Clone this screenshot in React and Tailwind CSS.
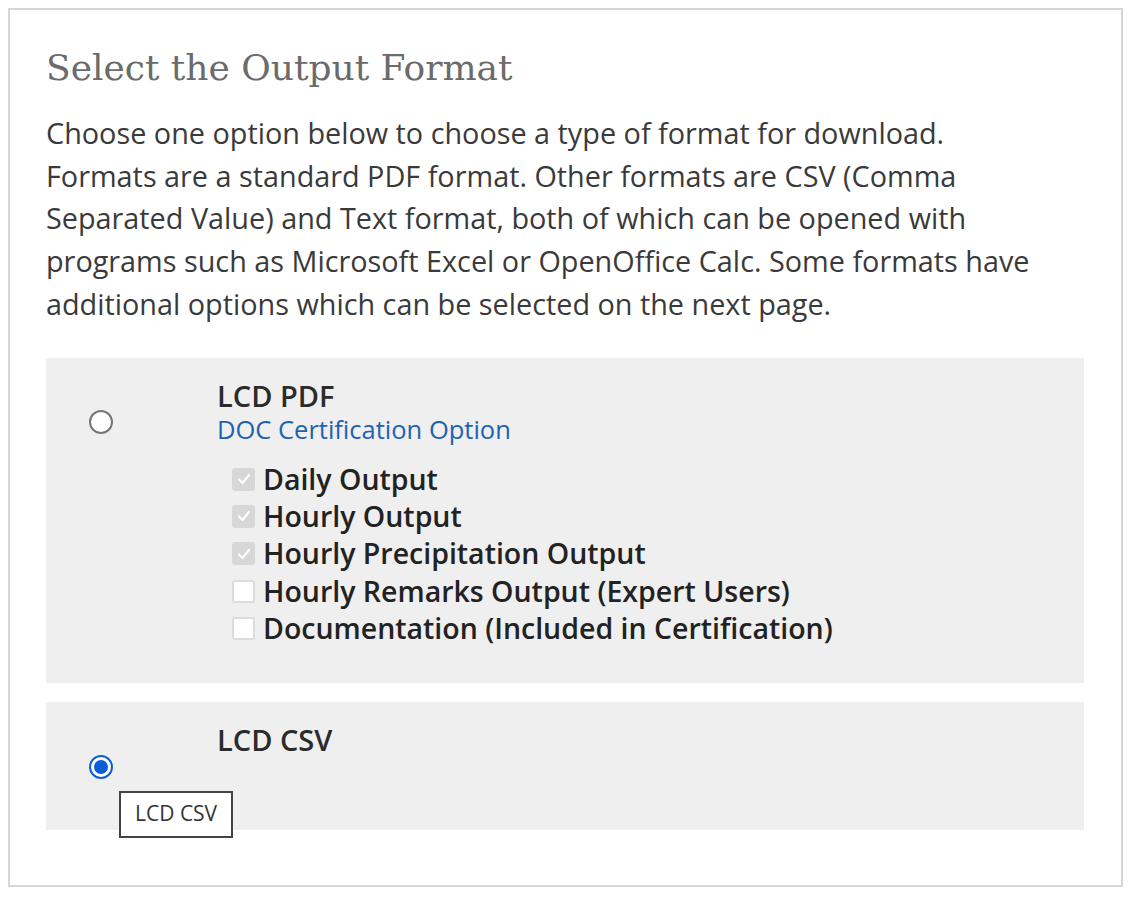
import React from 'react';

function Radio({ checked }) {
  if (checked) {
    return (
      <div className="w-[24px] h-[24px] rounded-full border-[2px] border-[#0a5fd6] bg-white flex items-center justify-center">
        <div className="w-[14px] h-[14px] rounded-full bg-[#0a5fd6]"></div>
      </div>
    );
  }
  return <div className="w-[24px] h-[24px] rounded-full border-[2px] border-[#767676] bg-white"></div>;
}

function Check({ checked }) {
  if (checked) {
    return (
      <div className="w-[23px] h-[23px] rounded-[3px] bg-[#d7d7d7] flex items-center justify-center">
        <svg width="16" height="16" viewBox="0 0 16 16" fill="none">
          <path d="M3 8.5 L6.5 12 L13 4" stroke="#ffffff" strokeWidth="2.2" strokeLinecap="round" strokeLinejoin="round" />
        </svg>
      </div>
    );
  }
  return <div className="w-[23px] h-[23px] rounded-[3px] border-[2px] border-[#dcdcdc] bg-white"></div>;
}

const pdfOptions = [
  { label: 'Daily Output', checked: true },
  { label: 'Hourly Output', checked: true },
  { label: 'Hourly Precipitation Output', checked: true },
  { label: 'Hourly Remarks Output (Expert Users)', checked: false },
  { label: 'Documentation (Included in Certification)', checked: false },
];

const introLines = [
  'Choose one option below to choose a type of format for download.',
  'Formats are a standard PDF format. Other formats are CSV (Comma',
  'Separated Value) and Text format, both of which can be opened with',
  'programs such as Microsoft Excel or OpenOffice Calc. Some formats have',
  'additional options which can be selected on the next page.',
];

export default function App() {
  return (
    <div className="bg-white w-[1132px] h-[897px] pt-2 pl-2" style={{ fontFamily: '"Open Sans", sans-serif' }}>
      <div className="w-[1115px] h-[879px] border-2 border-[#d6d6d6] pl-[36px] pr-[37px] pt-[36px]">
        <h1 className="text-[36px] leading-[44px] text-[#6b6b6b] font-normal" style={{ fontFamily: '"DejaVu Serif", serif' }}>
          Select the Output Format
        </h1>
        <p className="mt-[22px] text-[28.8px] leading-[42.7px] text-[#3a3a3a] whitespace-nowrap">
          {introLines.map((l, i) => (
            <React.Fragment key={i}>
              {l}
              {i < introLines.length - 1 && <br />}
            </React.Fragment>
          ))}
        </p>

        <div className="mt-[32px] bg-[#efefef] h-[325px] flex">
          <div className="w-[171px] shrink-0 pl-[43px] pt-[52px]">
            <Radio checked={false} />
          </div>
          <div className="pt-[19px]">
            <div className="text-[29px] leading-[37px] font-semibold text-[#2b2b2b]">LCD PDF</div>
            <div className="text-[25.5px] leading-[30px] text-[#1f62b0]">DOC Certification Option</div>
            <div className="mt-[17px] pl-[15px] flex flex-col">
              {pdfOptions.map((o) => (
                <div key={o.label} className="flex items-center gap-[8px] h-[37.3px]">
                  <Check checked={o.checked} />
                  <span className="text-[28.5px] font-semibold text-[#222] leading-[37px]">{o.label}</span>
                </div>
              ))}
            </div>
          </div>
        </div>

        <div className="mt-[19px] bg-[#efefef] h-[128px] flex">
          <div className="w-[171px] shrink-0 pl-[43px] pt-[53px] relative">
            <Radio checked={true} />
            <div className="absolute left-[73px] top-[89px] border-2 border-[#444] bg-white px-[14px] h-[47px] flex items-center text-[21px] text-[#333] whitespace-nowrap">
              LCD CSV
            </div>
          </div>
          <div className="pt-[19px]">
            <div className="text-[29px] leading-[37px] font-semibold text-[#2b2b2b]">LCD CSV</div>
          </div>
        </div>
      </div>
    </div>
  );
}
